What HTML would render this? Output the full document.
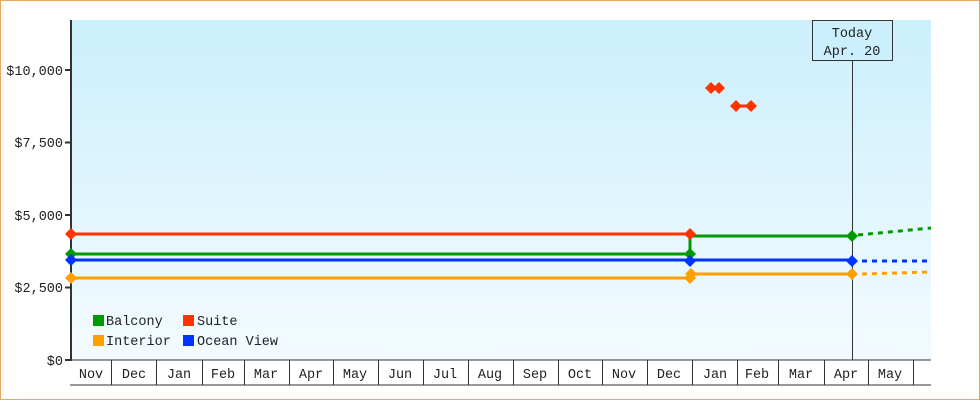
<!DOCTYPE html>
<html><head><style>
html,body{margin:0;padding:0;background:#fff}
svg{display:block}
text{font-family:"Liberation Mono","DejaVu Sans Mono",monospace;font-size:13.5px;fill:#222}
</style></head><body>
<svg width="980" height="400" viewBox="0 0 980 400" xmlns="http://www.w3.org/2000/svg">
<defs>
<linearGradient id="bg" x1="0" y1="0" x2="0" y2="1">
<stop offset="0" stop-color="#cbeffc"/><stop offset="1" stop-color="#f3fbff"/>
</linearGradient>
</defs>
<rect x="0.5" y="0.5" width="979" height="399" fill="#fff" stroke="#e8a860"/>
<rect x="71" y="20" width="860" height="340" fill="url(#bg)"/>
<line x1="71" y1="20" x2="71" y2="361" stroke="#333" stroke-width="2"/>
<g stroke="#333" stroke-width="2">
<line x1="65" y1="360" x2="71" y2="360"/><line x1="65" y1="287.5" x2="71" y2="287.5"/>
<line x1="65" y1="215" x2="71" y2="215"/><line x1="65" y1="142.5" x2="71" y2="142.5"/>
<line x1="65" y1="70" x2="71" y2="70"/>
</g>
<g text-anchor="end">
<text x="63" y="365">$0</text><text x="63" y="292">$2,500</text>
<text x="63" y="220">$5,000</text><text x="63" y="147">$7,500</text>
<text x="63" y="75">$10,000</text>
</g>
<line x1="70" y1="360" x2="931" y2="360" stroke="#333" stroke-width="1"/>
<line x1="70" y1="385" x2="931" y2="385" stroke="#333" stroke-width="1"/>
<g stroke="#333" stroke-width="1">
<line x1="111.5" y1="360" x2="111.5" y2="385"/><line x1="156.5" y1="360" x2="156.5" y2="385"/>
<line x1="202.5" y1="360" x2="202.5" y2="385"/><line x1="244.5" y1="360" x2="244.5" y2="385"/>
<line x1="289.5" y1="360" x2="289.5" y2="385"/><line x1="333.5" y1="360" x2="333.5" y2="385"/>
<line x1="378.5" y1="360" x2="378.5" y2="385"/><line x1="423.5" y1="360" x2="423.5" y2="385"/>
<line x1="468.5" y1="360" x2="468.5" y2="385"/><line x1="513.5" y1="360" x2="513.5" y2="385"/>
<line x1="558.5" y1="360" x2="558.5" y2="385"/><line x1="602.5" y1="360" x2="602.5" y2="385"/>
<line x1="647.5" y1="360" x2="647.5" y2="385"/><line x1="692.5" y1="360" x2="692.5" y2="385"/>
<line x1="737.5" y1="360" x2="737.5" y2="385"/><line x1="778.5" y1="360" x2="778.5" y2="385"/>
<line x1="824.5" y1="360" x2="824.5" y2="385"/><line x1="868.5" y1="360" x2="868.5" y2="385"/>
<line x1="913.5" y1="360" x2="913.5" y2="385"/>
</g>
<g text-anchor="middle">
<text x="91" y="378">Nov</text><text x="134" y="378">Dec</text><text x="179" y="378">Jan</text>
<text x="223" y="378">Feb</text><text x="266" y="378">Mar</text><text x="311" y="378">Apr</text>
<text x="355" y="378">May</text><text x="400" y="378">Jun</text><text x="445" y="378">Jul</text>
<text x="490" y="378">Aug</text><text x="535" y="378">Sep</text><text x="580" y="378">Oct</text>
<text x="624" y="378">Nov</text><text x="669" y="378">Dec</text><text x="715" y="378">Jan</text>
<text x="757" y="378">Feb</text><text x="801" y="378">Mar</text><text x="846" y="378">Apr</text>
<text x="890" y="378">May</text>
</g>
<line x1="852.5" y1="60" x2="852.5" y2="360" stroke="#333" stroke-width="1"/>
<rect x="812.5" y="20.5" width="80" height="40" fill="#cbeffc" stroke="#333"/>
<text x="852" y="37" text-anchor="middle">Today</text>
<text x="852" y="55" text-anchor="middle">Apr. 20</text>
<g stroke-width="3" fill="none">
<polyline points="71,234 690,234" stroke="#ff3300"/>
<polyline points="71,254 690,254 690,236 852,236" stroke="#009900"/>
<polyline points="858,235 931,228" stroke="#009900" stroke-dasharray="5,5"/>
<polyline points="71,260 852,260" stroke="#0033ff"/>
<polyline points="862,261 931,261" stroke="#0033ff" stroke-dasharray="5,5"/>
<polyline points="71,278 690,278 690,274 852,274" stroke="#ffa000"/>
<polyline points="862,274 931,272" stroke="#ffa000" stroke-dasharray="5,5"/>
<polyline points="736,106 751,106" stroke="#ff3300"/>
</g>
<g>
<g fill="#ff3300">
<path d="M71,228l6,6l-6,6l-6,-6z"/><path d="M690,228l6,6l-6,6l-6,-6z"/>
<path d="M711,82l6,6l-6,6l-6,-6z"/><path d="M719,82l6,6l-6,6l-6,-6z"/>
<path d="M736,100l6,6l-6,6l-6,-6z"/><path d="M751,100l6,6l-6,6l-6,-6z"/>
</g>
<g fill="#009900">
<path d="M71,248l6,6l-6,6l-6,-6z"/><path d="M690,248l6,6l-6,6l-6,-6z"/>
<path d="M852,230l6,6l-6,6l-6,-6z"/>
</g>
<g fill="#0033ff">
<path d="M71,254l6,6l-6,6l-6,-6z"/><path d="M690,255l6,6l-6,6l-6,-6z"/>
<path d="M852,255l6,6l-6,6l-6,-6z"/>
</g>
<g fill="#ffa000">
<path d="M71,272l6,6l-6,6l-6,-6z"/><path d="M690,272l6,6l-6,6l-6,-6z"/>
<path d="M691,268l6,6l-6,6l-6,-6z"/><path d="M852,268l6,6l-6,6l-6,-6z"/>
</g>
</g>
<rect x="93" y="315" width="11" height="11" fill="#009900"/>
<text x="106" y="325">Balcony</text>
<rect x="183" y="315" width="11" height="11" fill="#ff3300"/>
<text x="197" y="325">Suite</text>
<rect x="93" y="335" width="11" height="11" fill="#ffa000"/>
<text x="106" y="345">Interior</text>
<rect x="183" y="335" width="11" height="11" fill="#0033ff"/>
<text x="197" y="345">Ocean View</text>
</svg>
</body></html>
